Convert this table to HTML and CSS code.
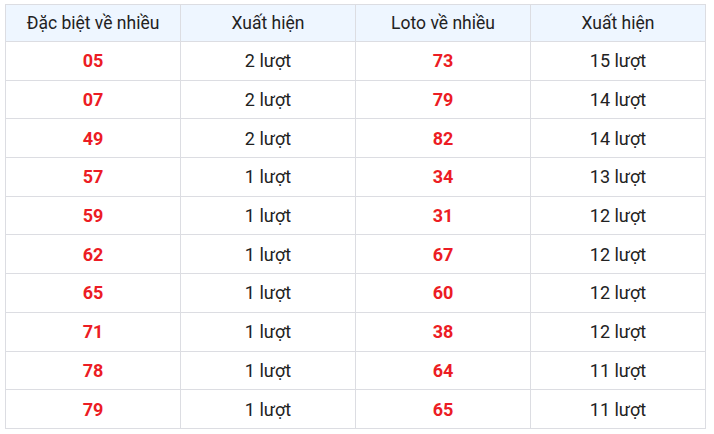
FILE: index.html
```html
<!DOCTYPE html>
<html lang="vi">
<head>
<meta charset="utf-8">
<link rel="stylesheet" href="styles.css">
</head>
<body>
<table class="stats">
  <thead>
    <tr><th>Đặc biệt về nhiều</th><th>Xuất hiện</th><th>Loto về nhiều</th><th>Xuất hiện</th></tr>
  </thead>
  <tbody>
    <tr><td class="num">05</td><td>2 lượt</td><td class="num">73</td><td>15 lượt</td></tr>
    <tr><td class="num">07</td><td>2 lượt</td><td class="num">79</td><td>14 lượt</td></tr>
    <tr><td class="num">49</td><td>2 lượt</td><td class="num">82</td><td>14 lượt</td></tr>
    <tr><td class="num">57</td><td>1 lượt</td><td class="num">34</td><td>13 lượt</td></tr>
    <tr><td class="num">59</td><td>1 lượt</td><td class="num">31</td><td>12 lượt</td></tr>
    <tr><td class="num">62</td><td>1 lượt</td><td class="num">67</td><td>12 lượt</td></tr>
    <tr><td class="num">65</td><td>1 lượt</td><td class="num">60</td><td>12 lượt</td></tr>
    <tr><td class="num">71</td><td>1 lượt</td><td class="num">38</td><td>12 lượt</td></tr>
    <tr><td class="num">78</td><td>1 lượt</td><td class="num">64</td><td>11 lượt</td></tr>
    <tr><td class="num">79</td><td>1 lượt</td><td class="num">65</td><td>11 lượt</td></tr>
  </tbody>
</table>
</body>
</html>
```
FILE: styles.css
```css
html, body {
  margin: 0;
  padding: 0;
  background: #ffffff;
}
body {
  padding: 4px 0 0 5px;
  font-family: Roboto, "Liberation Sans", sans-serif;
  color: #222222;
}
.stats {
  width: 701px;
  border-collapse: collapse;
  table-layout: fixed;
}
.stats th,
.stats td {
  border: 1px solid #dcdde2;
  text-align: center;
  padding: 0;
}
.stats th {
  background: #eef6ff;
  font-size: 17.5px;
  font-weight: 400;
  height: 36px;
}
.stats td {
  font-size: 18px;
  height: 37.7px;
}
.stats td.num {
  color: #ec1c24;
  font-weight: 700;
}
```
